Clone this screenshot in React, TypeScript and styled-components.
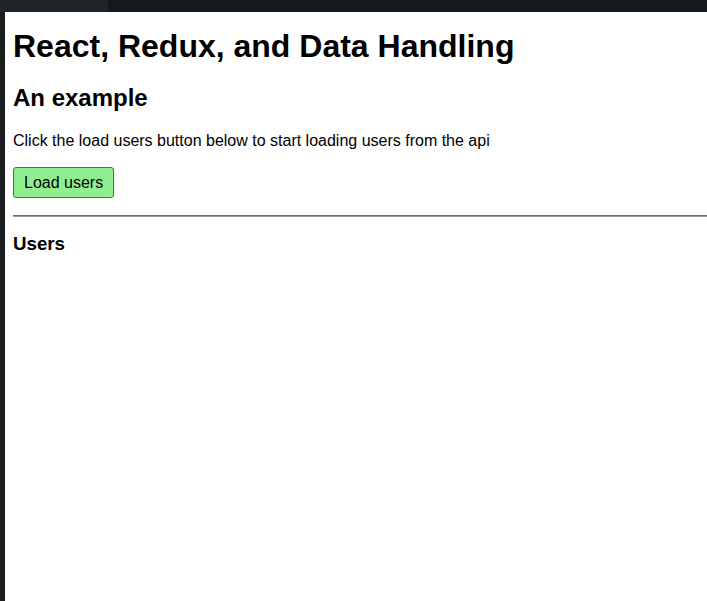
import styled, { createGlobalStyle } from "styled-components";

const GlobalStyle = createGlobalStyle`
  html, body {
    margin: 0;
    padding: 0;
    background: #ffffff;
  }
  body {
    font-family: "Liberation Sans", Arial, Helvetica, sans-serif;
    color: #000000;
  }
`;

export default function App(): React.ReactElement {
  return (
    <>
      <GlobalStyle />
      <Window>
        <TopBar>
          <ActiveTab />
          <TabRest />
        </TopBar>
        <Frame>
          <SideStrip />
          <Page>
            <Title>React, Redux, and Data Handling</Title>
            <Subtitle>An example</Subtitle>
            <Intro>Click the load users button below to start loading users from the api</Intro>
            <LoadButton type="button">Load users</LoadButton>
            <Divider />
            <SectionTitle>Users</SectionTitle>
          </Page>
        </Frame>
      </Window>
    </>
  );
}

const Window = styled.div`
  display: flex;
  flex-direction: column;
  min-height: 100vh;
`;

const TopBar = styled.div`
  display: flex;
  height: 12px;
  flex-shrink: 0;
`;

const ActiveTab = styled.div`
  width: 108px;
  background: #212427;
`;

const TabRest = styled.div`
  flex: 1;
  background: #16191c;
`;

const Frame = styled.div`
  display: flex;
  flex: 1;
`;

const SideStrip = styled.div`
  width: 5px;
  flex-shrink: 0;
  background: #1a1e21;
`;

const Page = styled.main`
  flex: 1;
  display: flex;
  flex-direction: column;
  align-items: flex-start;
  padding: 0 0 0 8px;
  background: #ffffff;
`;

const Title = styled.h1`
  margin: 16px 0 0;
  font-size: 32px;
  font-weight: bold;
  line-height: 37px;
`;

const Subtitle = styled.h2`
  margin: 19px 0 0;
  font-size: 24px;
  font-weight: bold;
  line-height: 28px;
`;

const Intro = styled.p`
  margin: 20px 0 0;
  font-size: 16px;
  line-height: 18px;
`;

const LoadButton = styled.button`
  margin-top: 17px;
  height: 31px;
  padding: 0 10px;
  font-family: "Liberation Sans", Arial, sans-serif;
  font-size: 16px;
  color: #000000;
  background: #90ee90;
  border: 1px solid #1f8f1f;
  border-radius: 3px;
`;

const Divider = styled.hr`
  align-self: stretch;
  margin: 17px 0 0;
  height: 0;
  border: none;
  border-top: 1px solid #6a6a6a;
  border-bottom: 1px solid #9a9a9a;
`;

const SectionTitle = styled.h3`
  margin: 16px 0 0;
  font-size: 18.72px;
  font-weight: bold;
  line-height: 22px;
`;
